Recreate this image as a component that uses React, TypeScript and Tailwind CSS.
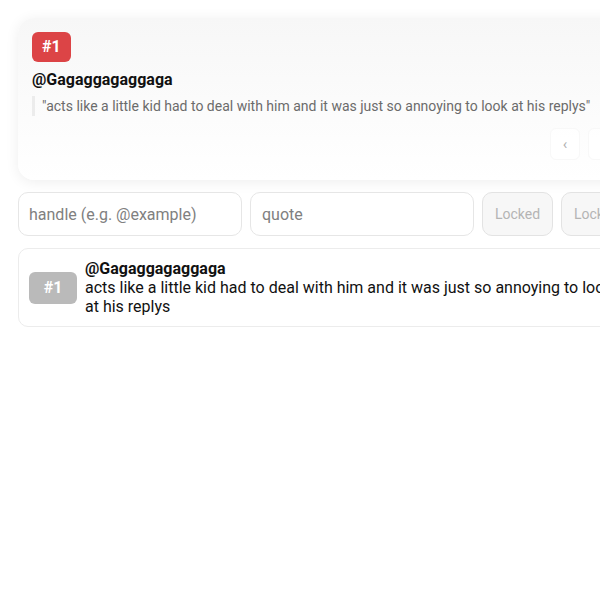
import React from 'react';

const handle = '@Gagaggagaggaga';
const quote = 'acts like a little kid had to deal with him and it was just so annoying to look at his replys';

const App: React.FC = () => {
    return (
        <div className="min-h-screen bg-white overflow-hidden" style={{ fontFamily: 'Roboto, "Liberation Sans", sans-serif' }}>
            <div className="w-[614px] ml-[18px] pt-[18px] flex flex-col gap-3">
                {/* featured card */}
                <div className="h-[162px] rounded-2xl bg-gradient-to-b from-[#f7f7f7] to-white shadow-[0_2px_14px_rgba(0,0,0,0.07)] px-[14px] pt-[14px] flex flex-col">
                    <span className="self-start h-[30px] px-[10px] flex items-center rounded-md bg-[#dc4446] text-white font-bold text-[16px]">#1</span>
                    <div className="mt-[8px] text-[16px] leading-[20px] font-bold text-[#111]">{handle}</div>
                    <div className="mt-[6px] border-l-[3px] border-[#ececec] pl-[7px] text-[14px] text-[#6b6b6b] leading-[20px]">
                        "{quote}"
                    </div>
                    <div className="mt-auto mb-[20px] flex justify-end gap-[8px]">
                        <button className="w-[30px] h-[32px] rounded-md bg-white/70 border border-[#f8f8f8] flex items-center justify-center text-[#b0b0b0] text-[15px]">‹</button>
                        <button className="w-[30px] h-[32px] rounded-md bg-white/70 border border-[#f8f8f8] flex items-center justify-center text-[#b0b0b0] text-[15px]">›</button>
                    </div>
                </div>

                {/* form row */}
                <div className="flex gap-2">
                    <input placeholder="handle (e.g. @example)" className="w-[224px] h-[44px] rounded-[10px] border border-[#e6e6e6] px-[10px] text-[16px] placeholder:text-[#808080] outline-none" />
                    <input placeholder="quote" className="w-[224px] h-[44px] rounded-[10px] border border-[#e6e6e6] px-[11px] text-[16px] placeholder:text-[#808080] outline-none" />
                    <button disabled className="w-[71px] h-[44px] rounded-[10px] border border-[#e3e3e3] bg-[#f7f7f7] text-[14px] text-[#b4b4b4]">Locked</button>
                    <button disabled className="w-[71px] h-[44px] rounded-[10px] border border-[#e3e3e3] bg-[#f7f7f7] text-[14px] text-[#b4b4b4]">Locked</button>
                </div>

                {/* list */}
                <div className="rounded-[10px] border border-[#ececec] pl-[10px] pr-[12px] py-[10px] flex items-center gap-2">
                    <span className="shrink-0 w-[48px] h-[32px] rounded-md bg-[#bababa] text-white font-bold text-[16px] flex items-center justify-center">#1</span>
                    <div className="text-[16px] leading-[19px] text-[#111]">
                        <div className="font-bold">{handle}</div>
                        <div>{quote}</div>
                    </div>
                </div>
            </div>
        </div>
    );
};

export default App;
